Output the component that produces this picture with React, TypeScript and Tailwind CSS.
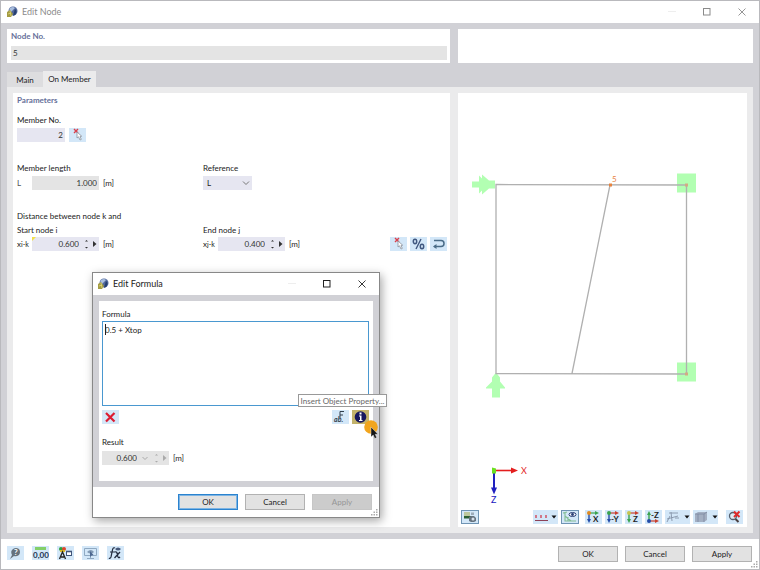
import { useState } from 'react';
import clsx from 'clsx';

type IconButtonProps = {
  label: string;
  children: React.ReactNode;
  className?: string;
};

const IconButton: React.FC<IconButtonProps> = ({ label, children, className }) => (
  <button
    type="button"
    aria-label={label}
    className={clsx(
      'flex h-3.5 shrink-0 items-center justify-center',
      className ? className : 'w-[17px] bg-[#d3e7f8]'
    )}
  >
    {children}
  </button>
);

const AppLogo = () => (
  <svg viewBox="0 0 12 12" className="size-3 shrink-0">
    <circle cx="7" cy="5" r="4.5" fill="#52699c" />
    <path d="M4 2 Q7 0 9 2 L5 6 L3 5Z" fill="#a9bede" />
    <path d="M9 3 Q12 5 9 9 L7 10 L8 6Z" fill="#273f70" />
    <path d="M1 6 L4 4 L7 8 L5 11 L1 11Z" fill="#a49c42" />
    <path d="M2 8 L5 7 M4 5 L5 10" stroke="#ded67a" strokeWidth="0.8" />
  </svg>
);

const PickIcon = () => (
  <svg viewBox="0 0 17 14" className="h-3.5 w-[17px]" fill="none">
    <path d="M5 1 L9 5 M9 1 L5 5" stroke="#d8404c" strokeWidth="1.4" />
    <path
      d="M8 4 L8 10 L9.5 8.8 L11 12 L12.3 11.4 L11 8.5 L12.7 8.2Z"
      fill="#fff"
      stroke="#8a929c"
      strokeWidth="0.8"
    />
  </svg>
);

const WindowButtons: React.FC<{ muted?: boolean }> = ({ muted }) => (
  <div className={clsx('ml-auto flex items-center', muted ? 'text-[#8a8a8a]' : 'text-[#222222]')}>
    <button type="button" disabled aria-label="Minimize" className="flex w-[35px] justify-center">
      <svg viewBox="0 0 8 8" className="size-2" stroke="#eeeeee">
        <path d="M0 3.5 H8" />
      </svg>
    </button>
    <button type="button" aria-label="Maximize" className="flex w-[35px] justify-center">
      <svg viewBox="0 0 8 8" className="size-2" fill="none" stroke="currentColor">
        <rect x="0.5" y="0.5" width="6.5" height="6.5" />
      </svg>
    </button>
    <button type="button" aria-label="Close" className="flex w-[35px] justify-center">
      <svg viewBox="0 0 8 8" className="size-2" fill="none" stroke="currentColor">
        <path d="M0.5 0.5 L7.5 7.5 M7.5 0.5 L0.5 7.5" strokeWidth="0.9" />
      </svg>
    </button>
  </div>
);

type NumberFieldProps = {
  id: string;
  value: string;
  disabled?: boolean;
  marked?: boolean;
};

const NumberField: React.FC<NumberFieldProps> = ({ id, value, disabled, marked }) => (
  <div
    className={clsx(
      'relative flex h-3.5 w-[67px] items-center',
      disabled ? 'bg-[#e4e4e4] text-[#aaaaaa]' : 'bg-[#e6e6f1] text-[#333333]'
    )}
  >
    {marked && (
      <svg viewBox="0 0 4 4" className="absolute top-0 left-0 size-1">
        <path d="M0 0 H4 L0 4Z" fill="#f3df4b" />
      </svg>
    )}
    <input
      id={id}
      defaultValue={value}
      readOnly={disabled}
      className="min-w-0 flex-1 bg-transparent text-right text-[#333333] outline-none"
    />
    {disabled && (
      <svg viewBox="0 0 8 8" className="ml-1 size-2" fill="none" stroke="currentColor">
        <path d="M1.5 3 L4 5.5 L6.5 3" />
      </svg>
    )}
    <svg viewBox="0 0 20 14" className="h-3.5 w-5 shrink-0" fill="currentColor">
      <path d="M6 4.5 L7.5 3 L9 4.5Z M6 10 L7.5 11.5 L9 10Z" />
      <path d="M14 4 L17.5 7 L14 10Z" />
    </svg>
  </div>
);

type DialogButtonProps = {
  label: string;
  variant?: 'default' | 'focused' | 'disabled';
  onClick?: () => void;
};

const DialogButton: React.FC<DialogButtonProps> = ({ label, variant = 'default', onClick }) => (
  <button
    type="button"
    disabled={variant === 'disabled'}
    onClick={onClick}
    className={clsx(
      'flex h-4 w-[60px] items-center justify-center border',
      variant === 'default' && 'border-[#b2b2b2] bg-[#e2e2e2]',
      variant === 'focused' && 'border-[#2b83cf] bg-[#e2e2e2] ring-1 ring-[#7db4e3] ring-inset',
      variant === 'disabled' && 'border-[#c6c6c6] bg-[#cccccc] text-[#969696]'
    )}
  >
    {label}
  </button>
);

const Grip = () => (
  <svg viewBox="0 0 8 8" className="absolute right-0 bottom-0 size-2" fill="#aaaaaa">
    <path d="M5 0h1.5v1.5H5z M2.5 2.5H4V4H2.5z M5 2.5h1.5V4H5z M0 5h1.5v1.5H0z M2.5 5H4v1.5H2.5z M5 5h1.5v1.5H5z" />
  </svg>
);

const ModelView = () => (
  <svg viewBox="458 94 289 416" className="min-h-0 w-full flex-1">
    <g fill="#b2ffb2">
      <rect x="677" y="174" width="19" height="19" />
      <rect x="677" y="363" width="19" height="19" />
      <path d="M472 182 h7 v-6 l3 3 v-4 l7 6 h6 v8 h-6 l-7 6 v-4 l-3 3 v-6 h-7Z" />
      <path d="M492 398 v-9 h-6 v-1 l6 -6 v-4 l4 -5 l4 5 v4 l5 6 v1 h-5 v9Z" />
    </g>
    <path
      d="M496 185 L686.500 185.500 V374.500 L496 374Z M610 185.500 L572 374"
      fill="none"
      stroke="#b0b0b0"
      strokeWidth="1.3"
    />
    <path d="M685 184h3v3h-3z M685 373h3v3h-3z" fill="#d3aa83" />
    <rect x="609" y="184" width="3" height="3" fill="#e8833f" />
    <text x="612" y="182" fontSize="8" fill="#e8833f">
      5
    </text>
    <path d="M495 471 H513" stroke="#e31e1e" strokeWidth="1.6" />
    <path d="M511 468 L518 471 L511 474Z" fill="#e31e1e" />
    <path d="M494 472 V489" stroke="#2020c0" strokeWidth="2" />
    <path d="M491 488 L494 495 L497 488Z" fill="#2020c0" />
    <path d="M492 468 l4 1 v5 h-4Z" fill="#6be01f" />
    <text x="521" y="474" fontSize="9" fill="#e31e1e">
      X
    </text>
    <text x="491" y="503" fontSize="9" fill="#2020c0">
      Z
    </text>
  </svg>
);

type AxisIconProps = { axis: string; up?: boolean; across: string; down: string; node: string };

const AxisIcon: React.FC<AxisIconProps> = ({ axis, up, across, down, node }) => (
  <svg viewBox="0 0 17 14" className="h-3.5 w-[17px]">
    {up ? (
      <>
        <path d="M4 11 V4" stroke={down} strokeWidth="1.4" />
        <path d="M2 5 L4 1 L6 5Z" fill={down} />
        <path d="M4 11 H11" stroke={across} strokeWidth="1.2" />
        <path d="M10 9 L14 11 L10 13Z" fill={across} />
        <circle cx="4" cy="11" r="2" fill={node} />
      </>
    ) : (
      <>
        <path d="M4 3 V10" stroke={down} strokeWidth="1.4" />
        <path d="M2 9 L4 13 L6 9Z" fill={down} />
        <path d="M4 3 H11" stroke={across} strokeWidth="1.2" />
        <path d="M10 1 L14 3 L10 5Z" fill={across} />
        <circle cx="4" cy="3" r="2" fill={node} />
      </>
    )}
    <text x={axis.length > 1 ? 6 : 8} y={up ? 8 : 12} fontSize="8" fontWeight="700" fill="#222">
      {axis}
    </text>
  </svg>
);

const DropArrow = () => (
  <svg viewBox="0 0 6 4" className="h-1 w-1.5" fill="#111">
    <path d="M0.5 0.5 H5.5 L3 3.5Z" />
  </svg>
);

const ViewToolbar = () => (
  <div className="flex items-center gap-[3px] pr-1 pb-[3px] pl-[3px]">
    <IconButton label="Render mode" className="w-[18px] border border-[#6f94b4] bg-[#d3e7f8]">
      <svg viewBox="0 0 16 12" className="h-3 w-4">
        <path d="M2 1 H8 V5 H2Z" fill="#bcc79c" />
        <path d="M2 5 H9 V7.500 H2Z" fill="#2d6030" />
        <path d="M9 1.500 H12 V4 H9Z" fill="#9cabb9" />
        <path d="M7 6 L9 5 H12 L14 7 V10 L12 11 H9 L7 10Z" fill="#66737f" />
        <circle cx="11" cy="8" r="1.500" fill="#d5e0ea" />
      </svg>
    </IconButton>
    <IconButton label="Dimensions" className="ml-auto w-[25px] gap-0.5 bg-[#d3e7f8]">
      <svg viewBox="0 0 15 12" className="h-3 w-[15px]">
        <path d="M2 4v3 M7 4v3 M12 4v3" stroke="#cf3b4c" strokeWidth="1.3" />
        <path d="M1 9.500 H14" stroke="#8c4258" />
      </svg>
      <DropArrow />
    </IconButton>
    <IconButton label="Visibility" className="w-[18px] border border-[#6f94b4] bg-[#d3e7f8]">
      <svg viewBox="0 0 16 12" className="h-3 w-4" fill="none">
        <path d="M3 1 V10 H14 M3 5 L9 10 M6 10 V6 M1 2 L5 1" stroke="#83bd94" strokeWidth="1.1" />
        <ellipse cx="10.500" cy="3.500" rx="3.500" ry="2" fill="#fff" stroke="#293e75" />
        <circle cx="10.500" cy="3.500" r="1.400" fill="#293e75" />
      </svg>
    </IconButton>
    <div className="ml-[3px] flex gap-[3px]">
      <IconButton label="View in X">
        <AxisIcon axis="X" across="#3aa34f" down="#244da8" node="#e08a20" />
      </IconButton>
      <IconButton label="View in Y">
        <AxisIcon axis="-Y" across="#c9402f" down="#244da8" node="#3aa34f" />
      </IconButton>
      <IconButton label="View in Z">
        <AxisIcon axis="Z" across="#c9402f" down="#3aa34f" node="#c8c450" />
      </IconButton>
      <IconButton label="View against Z">
        <AxisIcon axis="-Z" up across="#c9402f" down="#3aa34f" node="#244da8" />
      </IconButton>
      <IconButton label="Work plane" className="w-[25px] gap-1 bg-[#d3e7f8]">
        <svg viewBox="0 0 14 12" className="h-3 w-3.5" fill="none" stroke="#8493a8">
          <path d="M3 2 H12 M1 8 L12 5 M5 1 L6 10 M1 11 L4 5 M9 7 L13 7" strokeWidth="0.9" />
        </svg>
        <DropArrow />
      </IconButton>
    </div>
    <IconButton label="Solid view" className="w-[25px] gap-1 bg-[#d3e7f8]">
      <svg viewBox="0 0 14 12" className="h-3 w-3.5">
        <path d="M1 3 L4 1 H13 V9 L10 11 H1Z" fill="#a3afc2" />
        <path d="M1 3 H10 V11 M10 3 L13 1 M4 3 V11" fill="none" stroke="#7b89a1" strokeWidth="0.8" />
      </svg>
      <DropArrow />
    </IconButton>
    <IconButton label="Reset view" className="ml-[5px] w-[17px] bg-[#d3e7f8]">
      <svg viewBox="0 0 17 14" className="h-3.5 w-[17px]" fill="none">
        <circle cx="7" cy="6" r="3.500" fill="#dfeaf3" stroke="#555f6d" strokeWidth="1.3" />
        <path d="M9.500 9 L12.500 12" stroke="#4b4040" strokeWidth="2" />
        <path d="M8 1.500 L13.500 7 M13.500 1.500 L8 7" stroke="#e02a2a" strokeWidth="2" />
      </svg>
    </IconButton>
  </div>
);

const FooterTools = () => (
  <div className="flex gap-2">
    <IconButton label="Help">
      <svg viewBox="0 0 17 14" className="h-3.5 w-[17px]">
        <path d="M3 13 L5 9 Q3 5 6 3 Q9 1 12 3 Q14 6 12 9 Q9 11 7 10Z" fill="#66727d" />
        <text x="7" y="9" fontSize="8" fontWeight="700" fill="#fff">
          ?
        </text>
      </svg>
    </IconButton>
    <IconButton label="Units">
      <svg viewBox="0 0 17 14" className="h-3.5 w-[17px]">
        <rect x="3" y="1" width="11" height="3" fill="#83cf68" />
        <text x="1" y="12" fontSize="8" fontWeight="700" fill="#223350">
          0,00
        </text>
      </svg>
    </IconButton>
    <IconButton label="Display properties">
      <svg viewBox="0 0 17 14" className="h-3.5 w-[17px]">
        <circle cx="4" cy="3" r="2" fill="#2da13d" />
        <circle cx="7" cy="3" r="2" fill="#e0462c" />
        <path d="M3 4h5v2H3z" fill="#d7b727" />
        <path d="M2.500 13 L5.500 6 L8.500 13 M4 11 H7" fill="none" stroke="#222" strokeWidth="1.3" />
        <rect x="9.500" y="5.500" width="5" height="4" fill="#fff" stroke="#405579" />
        <path d="M9 5.500 H15" stroke="#405579" strokeWidth="1.6" />
      </svg>
    </IconButton>
    <IconButton label="Display">
      <svg viewBox="0 0 17 14" className="h-3.5 w-[17px]" fill="none">
        <path d="M2.500 2.500 H14.500 V9.500 H2.500Z M8.500 10 V12.500 M5 12.500 H12" stroke="#8fa9c2" />
        <path d="M5 6 Q9 2 12 6 Q9 9 5 6Z" fill="#8199b4" />
        <path d="M8 5 V11 L9.500 9.500 L11.500 9Z" fill="#4c6790" />
      </svg>
    </IconButton>
    <IconButton label="Formula">
      <svg viewBox="0 0 17 14" className="h-3.5 w-[17px]" fill="none">
        <path d="M8 2 Q6 1 5.500 4 L4 11 Q3 13 2 12 M3 6 H8" stroke="#232c3f" strokeWidth="1.2" />
        <path d="M8 6 Q10 5 10.500 9 T13 11 M13 6 L7.500 12" stroke="#232c3f" strokeWidth="1.3" />
        <path d="M8 3 Q11 0 14 3 Q11 6 8 3Z" fill="#445779" />
      </svg>
    </IconButton>
  </div>
);

const MemberTab = () => (
  <div className="bg-white pr-[3px] pl-1">
    <h2 className="h-3.5 font-bold text-[#66709a]">Parameters</h2>
    <label htmlFor="member" className="mt-1.5 block h-3.5">
      Member No.
    </label>
    <div className="mt-px flex gap-1">
      <input
        id="member"
        defaultValue="2"
        className="h-3.5 w-12 bg-[#e6e6f1] pr-0.5 text-right text-[#333333] outline-none"
      />
      <IconButton label="Pick member">
        <PickIcon />
      </IconButton>
    </div>
    <div className="mt-[19px] grid grid-cols-[186px_1fr]">
      <div>
        <label htmlFor="length" className="block h-3.5">
          Member length
        </label>
        <div className="mt-px flex">
          <span className="w-[15px] text-[#555555]">L</span>
          <input
            id="length"
            defaultValue="1.000"
            readOnly
            className="h-3.5 w-[67px] bg-[#e4e4e4] pr-0.5 text-right text-[#333333] outline-none"
          />
          <span className="ml-1">[m]</span>
        </div>
      </div>
      <div>
        <label htmlFor="reference" className="block h-3.5">
          Reference
        </label>
        <div className="relative mt-px w-[49px]">
          <select
            id="reference"
            defaultValue="L"
            className="block h-3.5 w-full appearance-none bg-[#e6e6f1] pl-1 outline-none"
          >
            <option>L</option>
          </select>
          <svg
            viewBox="0 0 8 8"
            className="pointer-events-none absolute top-[3px] right-0.5 size-2"
            fill="none"
            stroke="#777777"
          >
            <path d="M1 2.500 L4 5.500 L7 2.500" />
          </svg>
        </div>
      </div>
    </div>
    <p className="mt-[19px] h-3.5">Distance between node k and</p>
    <div className="flex items-end">
      <div className="w-[186px]">
        <label htmlFor="start" className="block h-3.5">
          Start node i
        </label>
        <div className="flex">
          <span className="w-[15px] whitespace-nowrap">
            x<small className="text-[7px]">i-k</small>
          </span>
          <NumberField id="start" value="0.600" marked />
          <span className="ml-1">[m]</span>
        </div>
      </div>
      <div>
        <label htmlFor="end" className="block h-3.5">
          End node j
        </label>
        <div className="flex">
          <span className="w-[15px] whitespace-nowrap">
            x<small className="text-[7px]">j-k</small>
          </span>
          <NumberField id="end" value="0.400" />
          <span className="ml-1">[m]</span>
        </div>
      </div>
      <div className="ml-auto flex gap-[3px]">
        <IconButton label="Pick distance">
          <PickIcon />
        </IconButton>
        <IconButton label="Percent">
          <svg viewBox="0 0 17 14" className="h-3.5 w-[17px]" fill="none" stroke="#40577f">
            <ellipse cx="5" cy="4.500" rx="1.700" ry="2.200" strokeWidth="1.5" />
            <ellipse cx="12" cy="9.500" rx="1.700" ry="2.200" strokeWidth="1.5" />
            <path d="M11 2 L6 12" strokeWidth="1.4" />
          </svg>
        </IconButton>
        <IconButton label="Reverse">
          <svg viewBox="0 0 17 14" className="h-3.5 w-[17px]" fill="none" stroke="#4a6c87">
            <path d="M4 3.500 H11 Q14 3.500 14 6.500 T11 9.500 H4" strokeWidth="1.5" />
            <path d="M6.500 7 L3 9.500 L6.500 12Z" fill="#4a6c87" stroke="none" />
          </svg>
        </IconButton>
      </div>
    </div>
  </div>
);

const FormulaDialog: React.FC<{ close: () => void }> = ({ close }) => (
  <div
    role="dialog"
    aria-label="Edit Formula"
    className="absolute top-[271px] left-[91px] w-[288px] border border-[#888888] bg-white shadow-[2px_3px_9px_rgba(0,0,0,0.35)]"
  >
    <header className="flex h-[22px] items-center gap-1 pl-1 text-[9px]">
      <AppLogo />
      <span>Edit Formula</span>
      <WindowButtons />
    </header>
    <div className="bg-[#d1d1d6] p-1.5">
      <div className="bg-white pt-1.5 pr-1 pb-4 pl-[3px]">
        <label htmlFor="formula" className="block h-3.5">
          Formula
        </label>
        <div className="relative">
          <textarea
            id="formula"
            defaultValue="0.5 + Xtop"
            className="block h-[85px] w-full resize-none border border-[#4a98d0] px-0.5 pt-px outline-none"
          />
          <span className="absolute top-[3px] left-[3px] h-[11px] w-px bg-[#222222]" />
        </div>
        <div className="mt-1 flex gap-[3px]">
          <IconButton label="Clear">
            <svg viewBox="0 0 17 14" className="h-3.5 w-[17px]">
              <path d="M4 3 L12.500 11.500 M12.500 3 L4 11.500" stroke="#dc1c32" strokeWidth="2.2" />
            </svg>
          </IconButton>
          <IconButton label="Functions" className="ml-auto w-[17px] bg-[#d3e7f8]">
            <svg viewBox="0 0 17 14" className="h-3.5 w-[17px]" fill="#303f4d">
              <path d="M8 8 V1.500 H12 M8 5 H11" fill="none" stroke="#303f4d" />
              <text x="2" y="12" fontSize="7" fontStyle="italic" fontWeight="700">
                ab.
              </text>
            </svg>
          </IconButton>
          <IconButton label="Insert Object Property" className="w-[17px] bg-[#c3b36c]">
            <svg viewBox="0 0 17 14" className="h-3.5 w-[17px]">
              <circle cx="8.500" cy="7" r="5.800" fill="#16165e" />
              <path d="M7.500 2.500h2v2h-2z M7 5.500h2.500V10H10.500v1H7v-1h1V6.500H7z" fill="#fff" />
            </svg>
          </IconButton>
        </div>
        <label htmlFor="result" className="mt-[11px] block h-3.5">
          Result
        </label>
        <div className="mt-0.5 flex">
          <NumberField id="result" value="0.600" disabled />
          <span className="ml-1">[m]</span>
        </div>
      </div>
    </div>
    <footer className="relative flex justify-end gap-[7px] p-[7px]">
      <DialogButton label="OK" variant="focused" onClick={close} />
      <DialogButton label="Cancel" onClick={close} />
      <DialogButton label="Apply" variant="disabled" />
      <Grip />
    </footer>
    <div
      role="tooltip"
      className="absolute top-[121px] left-[205px] flex h-[13px] w-[89px] items-center justify-center border border-[#999999] bg-white whitespace-nowrap text-[#686868]"
    >
      Insert Object Property...
    </div>
    <svg viewBox="0 0 18 20" className="pointer-events-none absolute top-[146px] left-[270px] h-5 w-[18px]">
      <circle cx="8" cy="8" r="6.800" fill="#f2a51d" />
      <path
        d="M8 8 V18 L10.200 16 L11.800 19.500 L13.700 18.600 L12.200 15.300 H15Z"
        fill="#161616"
        stroke="#fff"
        strokeWidth="0.4"
      />
    </svg>
  </div>
);

const App: React.FC = () => {
  const [formulaOpen, setFormulaOpen] = useState(true);

  return (
    <div className="relative flex min-h-screen flex-col border border-[#b9b9bd] bg-white font-['Lato','Open_Sans',sans-serif] text-[8px] leading-[14px] text-[#222222]">
      <header className="flex h-[22px] items-center gap-1 pl-[5px] text-[9px] text-[#8c8c8c]">
        <AppLogo />
        <span>Edit Node</span>
        <WindowButtons muted />
      </header>

      <main className="flex flex-1 flex-col bg-[#d1d1d6] p-1.5">
        <div className="grid grid-cols-[minmax(0,1fr)_295px] gap-2">
          <div className="bg-white pr-[3px] pb-[3px] pl-1">
            <label htmlFor="node" className="block h-[17px] font-bold text-[#66709a]">
              Node No.
            </label>
            <input
              id="node"
              defaultValue="5"
              readOnly
              className="block h-3.5 w-full bg-[#e4e4e4] px-0.5 text-[#333333] outline-none"
            />
          </div>
          <div className="bg-white" />
        </div>

        <div role="tablist" className="mt-2 flex items-end">
          <button type="button" role="tab" className="h-[15px] w-9 bg-[#dddddf]">
            Main
          </button>
          <button type="button" role="tab" aria-selected className="h-4 w-[53px] bg-[#ebebec]">
            On Member
          </button>
        </div>

        <div className="grid flex-1 grid-cols-[minmax(0,1fr)_289px] gap-2 bg-[#ebebec] p-1.5">
          <MemberTab />
          <div className="flex flex-col bg-white">
            <ModelView />
            <ViewToolbar />
          </div>
        </div>
      </main>

      <footer className="relative flex items-start justify-between py-[7px] pr-[7px] pl-1.5">
        <FooterTools />
        <div className="flex gap-[7px]">
          <DialogButton label="OK" />
          <DialogButton label="Cancel" />
          <DialogButton label="Apply" />
        </div>
        <Grip />
      </footer>

      {formulaOpen && <FormulaDialog close={() => setFormulaOpen(false)} />}
    </div>
  );
};

export default App;
